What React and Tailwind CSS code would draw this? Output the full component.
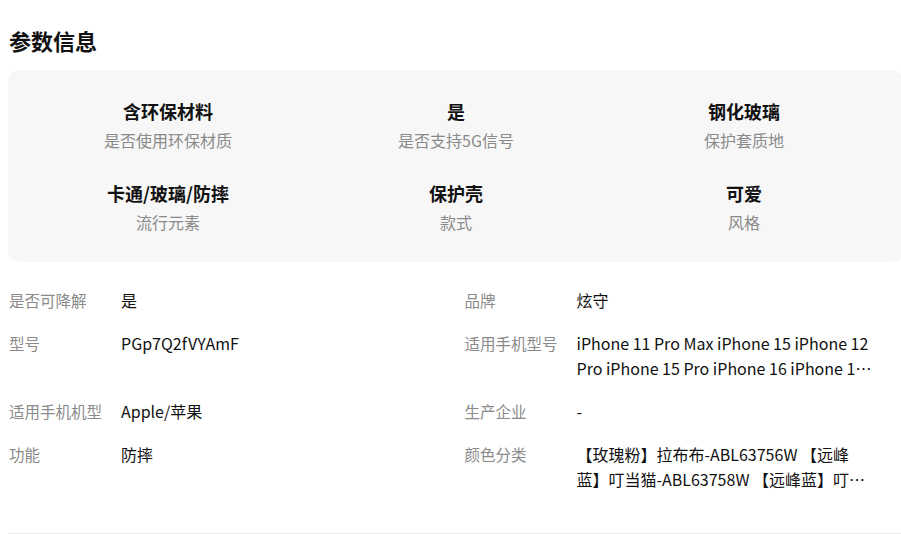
import React from 'react';

const highlights = [
  { title: '含环保材料', sub: '是否使用环保材质' },
  { title: '是', sub: '是否支持5G信号' },
  { title: '钢化玻璃', sub: '保护套质地' },
  { title: '卡通/玻璃/防摔', sub: '流行元素' },
  { title: '保护壳', sub: '款式' },
  { title: '可爱', sub: '风格' },
];

const specs = [
  { label: '是否可降解', value: '是' },
  { label: '品牌', value: '炫守' },
  { label: '型号', value: 'PGp7Q2fVYAmF' },
  { label: '适用手机型号', value: 'iPhone 11 Pro Max iPhone 15 iPhone 12 Pro iPhone 15 Pro iPhone 16 iPhone 13 Pro Max iPhone 14' },
  { label: '适用手机机型', value: 'Apple/苹果' },
  { label: '生产企业', value: '-' },
  { label: '功能', value: '防摔' },
  { label: '颜色分类', value: '【玫瑰粉】拉布布-ABL63756W 【远峰蓝】叮当猫-ABL63758W 【远峰蓝】叮当猫-ABL63759W' },
];

export default function App() {
  return (
    <div
      className="w-[904px] bg-white pl-2 pt-[25px] text-[#1a1a1a]"
      style={{ fontFamily: '"Noto Sans CJK SC", "Noto Sans", sans-serif' }}
    >
      <h2 className="pl-px text-[22px] font-bold leading-[30px] text-[#111]">参数信息</h2>

      {/* highlight card */}
      <div className="mt-[15px] grid grid-cols-3 gap-y-[28px] rounded-xl bg-[#f7f7f7] px-4 pt-[28px] pb-[28px]">
        {highlights.map((h) => (
          <div key={h.title} className="flex flex-col items-center">
            <div className="text-[18px] font-bold leading-[26px] text-[#111]">{h.title}</div>
            <div className="mt-1 text-[16px] leading-[24px] text-[#8a8a8a]">{h.sub}</div>
          </div>
        ))}
      </div>

      {/* spec list */}
      <div className="mt-[26px] grid grid-cols-2 gap-x-4 gap-y-[18px] pl-px">
        {specs.map((s) => (
          <div key={s.label} className="flex leading-[25px]">
            <div className="w-[112px] shrink-0 text-[15.5px] text-[#8a8a8a]">{s.label}</div>
            <div className="line-clamp-2 w-[296px] text-[16px] text-[#111]">{s.value}</div>
          </div>
        ))}
      </div>

      <div className="mt-[41px] h-px bg-[#ececec]" />
    </div>
  );
}
